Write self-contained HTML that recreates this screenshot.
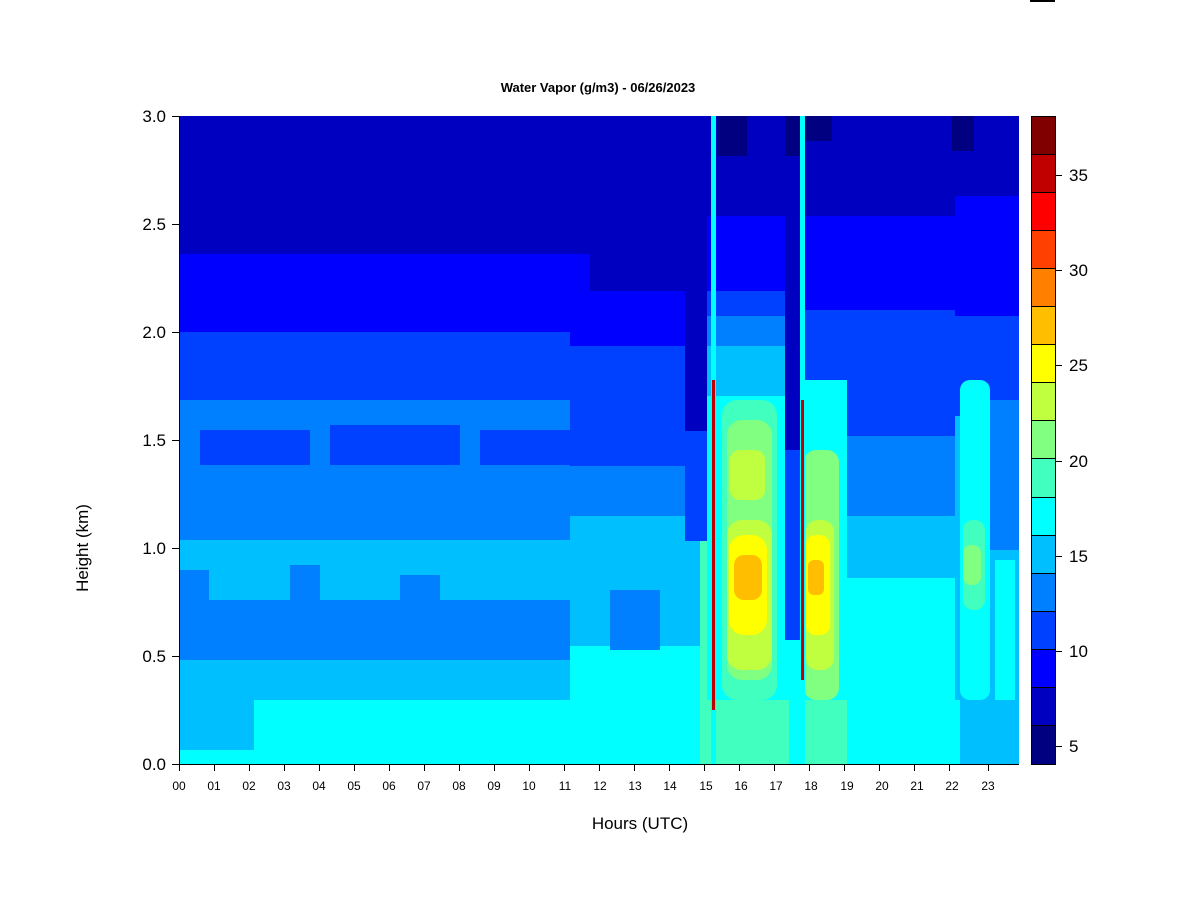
<!DOCTYPE html>
<html><head><meta charset="utf-8"><style>
html,body{margin:0;padding:0;background:#fff;width:1200px;height:900px;overflow:hidden}
svg text{font-family:"Liberation Sans",Arial,sans-serif;fill:#000}
</style></head><body>
<svg width="1200" height="900" viewBox="0 0 1200 900" xmlns="http://www.w3.org/2000/svg">
<defs><clipPath id="c"><rect x="179" y="116" width="840" height="648"/></clipPath></defs>
<rect x="1030" y="0" width="25" height="2" fill="#000"/>
<text x="598" y="92" font-size="13" font-weight="bold" text-anchor="middle">Water Vapor (g/m3) - 06/26/2023</text>
<g clip-path="url(#c)">
<rect x="179" y="116" width="840" height="648" fill="#00ffff"/>
<!-- hours 0-11 -->
<rect x="179" y="116" width="400" height="584" fill="#00bfff"/>
<rect x="179" y="600" width="400" height="60" fill="#0080ff"/>
<rect x="179" y="116" width="400" height="424" fill="#0080ff"/>
<rect x="179" y="116" width="400" height="284" fill="#0040ff"/>
<rect x="179" y="116" width="400" height="216" fill="#0000ff"/>
<rect x="179" y="116" width="400" height="138" fill="#0000c0"/>
<rect x="200" y="430" width="110" height="35" fill="#0040ff"/>
<rect x="330" y="425" width="130" height="40" fill="#0040ff"/>
<rect x="480" y="430" width="90" height="35" fill="#0040ff"/>
<rect x="179" y="570" width="30" height="30" fill="#0080ff"/>
<rect x="290" y="565" width="30" height="35" fill="#0080ff"/>
<rect x="400" y="575" width="40" height="25" fill="#0080ff"/>
<rect x="179" y="700" width="75" height="50" fill="#00bfff"/>
<!-- hours 11-14.8 -->
<rect x="570" y="116" width="140" height="648" fill="#00ffff"/>
<rect x="570" y="116" width="140" height="530" fill="#00bfff"/>
<rect x="610" y="590" width="50" height="60" fill="#0080ff"/>
<rect x="570" y="116" width="140" height="400" fill="#0080ff"/>
<rect x="570" y="116" width="140" height="350" fill="#0040ff"/>
<rect x="570" y="116" width="140" height="230" fill="#0000ff"/>
<rect x="570" y="116" width="20" height="216" fill="#0000ff"/>
<rect x="590" y="116" width="120" height="175" fill="#0000c0"/>
<rect x="570" y="116" width="20" height="138" fill="#0000c0"/>
<rect x="685" y="116" width="22" height="315" fill="#0000c0"/>
<rect x="685" y="431" width="22" height="110" fill="#0040ff"/>
<rect x="700" y="541" width="10" height="223" fill="#40ffbf"/>
<!-- 15-17.5 -->
<rect x="707" y="116" width="82" height="648" fill="#00ffff"/>
<rect x="707" y="116" width="82" height="280" fill="#00bfff"/>
<rect x="707" y="116" width="82" height="230" fill="#0080ff"/>
<rect x="707" y="116" width="82" height="200" fill="#0040ff"/>
<rect x="707" y="116" width="82" height="175" fill="#0000ff"/>
<rect x="707" y="116" width="82" height="100" fill="#0000c0"/>
<rect x="717" y="116" width="30" height="40" fill="#000080"/>
<rect x="722" y="400" width="55" height="300" rx="15" fill="#40ffbf"/>
<rect x="727" y="420" width="45" height="260" rx="15" fill="#80ff80"/>
<rect x="730" y="450" width="35" height="50" rx="10" fill="#bfff40"/>
<rect x="727" y="520" width="45" height="150" rx="15" fill="#bfff40"/>
<rect x="729" y="535" width="38" height="100" rx="15" fill="#ffff00"/>
<rect x="734" y="555" width="28" height="45" rx="10" fill="#ffbf00"/>
<rect x="707" y="700" width="82" height="64" fill="#40ffbf"/>
<rect x="785" y="116" width="15" height="334" fill="#0000c0"/>
<rect x="785" y="450" width="15" height="190" fill="#0040ff"/>
<rect x="785" y="116" width="15" height="40" fill="#000080"/>
<!-- 18-22 -->
<rect x="802" y="116" width="160" height="648" fill="#00ffff"/>
<rect x="802" y="116" width="160" height="462" fill="#00bfff"/>
<rect x="802" y="116" width="160" height="400" fill="#0080ff"/>
<rect x="802" y="116" width="160" height="320" fill="#0040ff"/>
<rect x="802" y="116" width="160" height="194" fill="#0000ff"/>
<rect x="802" y="116" width="160" height="100" fill="#0000c0"/>
<rect x="802" y="380" width="45" height="384" fill="#00ffff"/>
<rect x="804" y="450" width="35" height="250" rx="12" fill="#80ff80"/>
<rect x="806" y="520" width="28" height="150" rx="12" fill="#bfff40"/>
<rect x="806" y="535" width="24" height="100" rx="10" fill="#ffff00"/>
<rect x="808" y="560" width="16" height="35" rx="6" fill="#ffbf00"/>
<rect x="802" y="700" width="45" height="64" fill="#40ffbf"/>
<rect x="802" y="116" width="30" height="25" fill="#000080"/>
<!-- 22-24 -->
<rect x="955" y="116" width="64" height="648" fill="#00bfff"/>
<rect x="955" y="116" width="64" height="300" fill="#0040ff"/>
<rect x="955" y="116" width="64" height="200" fill="#0000ff"/>
<rect x="955" y="116" width="64" height="80" fill="#0000c0"/>
<rect x="952" y="116" width="22" height="35" fill="#000080"/>
<rect x="960" y="380" width="30" height="320" rx="10" fill="#00ffff"/>
<rect x="963" y="520" width="22" height="90" rx="10" fill="#40ffbf"/>
<rect x="963" y="545" width="18" height="40" rx="8" fill="#80ff80"/>
<rect x="990" y="400" width="29" height="150" fill="#0080ff"/>
<rect x="995" y="560" width="20" height="140" fill="#00ffff"/>
<rect x="950" y="700" width="10" height="64" fill="#00ffff"/>
<!-- vertical lines -->
<rect x="711" y="116" width="5" height="648" fill="#00ffff"/>
<rect x="712" y="380" width="3" height="330" fill="#c00000"/>
<rect x="800" y="116" width="5" height="648" fill="#00ffff"/>
<rect x="801" y="400" width="3" height="280" fill="#c00000"/>
</g>
<!-- axes -->
<g stroke="#000" stroke-width="1" fill="none">
<line x1="179.5" y1="116" x2="179.5" y2="764"/>
<line x1="179" y1="764.5" x2="1019" y2="764.5"/>
<line x1="172" y1="116.5" x2="179" y2="116.5"/>
<line x1="172" y1="224.5" x2="179" y2="224.5"/>
<line x1="172" y1="332.5" x2="179" y2="332.5"/>
<line x1="172" y1="440.5" x2="179" y2="440.5"/>
<line x1="172" y1="548.5" x2="179" y2="548.5"/>
<line x1="172" y1="656.5" x2="179" y2="656.5"/>
<line x1="172" y1="764.5" x2="179" y2="764.5"/>
</g>
<g font-size="17" text-anchor="end">
<text x="166" y="122">3.0</text><text x="166" y="230">2.5</text><text x="166" y="338">2.0</text>
<text x="166" y="446">1.5</text><text x="166" y="554">1.0</text><text x="166" y="662">0.5</text><text x="166" y="770">0.0</text>
</g>
<g stroke="#000">
<path d="M179.5 764v7M214.5 764v7M249.5 764v7M284.5 764v7M319.5 764v7M354.5 764v7M389.5 764v7M424.5 764v7M459.5 764v7M494.5 764v7M529.5 764v7M564.5 764v7M599.5 764v7M634.5 764v7M669.5 764v7M704.5 764v7M739.5 764v7M774.5 764v7M809.5 764v7M844.5 764v7M879.5 764v7M914.5 764v7M949.5 764v7M988.5 764v7"/>
</g>
<g font-size="12" text-anchor="middle">
<text x="179" y="790">00</text><text x="214" y="790">01</text><text x="249" y="790">02</text><text x="284" y="790">03</text>
<text x="319" y="790">04</text><text x="354" y="790">05</text><text x="389" y="790">06</text><text x="424" y="790">07</text>
<text x="459" y="790">08</text><text x="494" y="790">09</text><text x="529" y="790">10</text><text x="565" y="790">11</text>
<text x="600" y="790">12</text><text x="635" y="790">13</text><text x="670" y="790">14</text><text x="706" y="790">15</text>
<text x="741" y="790">16</text><text x="776" y="790">17</text><text x="811" y="790">18</text><text x="847" y="790">19</text>
<text x="882" y="790">20</text><text x="917" y="790">21</text><text x="952" y="790">22</text><text x="988" y="790">23</text>
</g>
<text x="640" y="829" font-size="17" text-anchor="middle">Hours (UTC)</text>
<text transform="translate(88,548) rotate(-90)" font-size="17" text-anchor="middle">Height (km)</text>
<!-- colorbar -->
<g stroke="#000" stroke-width="1">
<rect x="1031.5" y="116.5" width="24" height="38" fill="#800000"/>
<rect x="1031.5" y="154.5" width="24" height="38" fill="#c00000"/>
<rect x="1031.5" y="192.5" width="24" height="38" fill="#ff0000"/>
<rect x="1031.5" y="230.5" width="24" height="38" fill="#ff4000"/>
<rect x="1031.5" y="268.5" width="24" height="38" fill="#ff8000"/>
<rect x="1031.5" y="306.5" width="24" height="38" fill="#ffbf00"/>
<rect x="1031.5" y="344.5" width="24" height="38" fill="#ffff00"/>
<rect x="1031.5" y="382.5" width="24" height="38" fill="#bfff40"/>
<rect x="1031.5" y="420.5" width="24" height="38" fill="#80ff80"/>
<rect x="1031.5" y="458.5" width="24" height="39" fill="#40ffbf"/>
<rect x="1031.5" y="497.5" width="24" height="38" fill="#00ffff"/>
<rect x="1031.5" y="535.5" width="24" height="38" fill="#00bfff"/>
<rect x="1031.5" y="573.5" width="24" height="38" fill="#0080ff"/>
<rect x="1031.5" y="611.5" width="24" height="38" fill="#0040ff"/>
<rect x="1031.5" y="649.5" width="24" height="38" fill="#0000ff"/>
<rect x="1031.5" y="687.5" width="24" height="38" fill="#0000c0"/>
<rect x="1031.5" y="725.5" width="24" height="39" fill="#000080"/>
<path d="M1055 175.5h7M1055 270.5h7M1055 365.5h7M1055 461.5h7M1055 556.5h7M1055 651.5h7M1055 746.5h7" fill="none"/>
</g>
<g font-size="17">
<text x="1069" y="181">35</text><text x="1069" y="276">30</text><text x="1069" y="371">25</text>
<text x="1069" y="467">20</text><text x="1069" y="562">15</text><text x="1069" y="657">10</text><text x="1069" y="752">5</text>
</g>
</svg>
</body></html>
